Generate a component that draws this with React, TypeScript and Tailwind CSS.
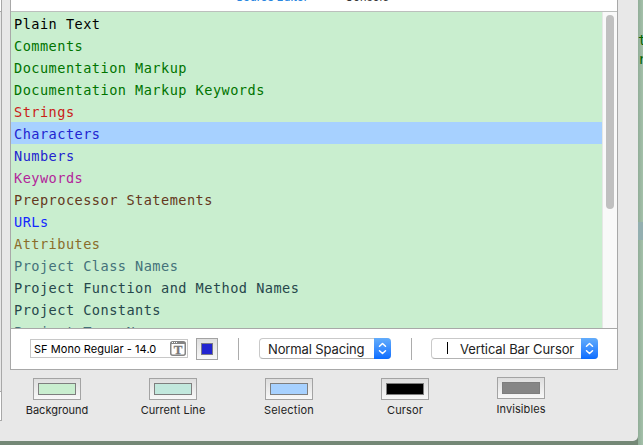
import React from "react";

const rows: { label: string; color: string; selected?: boolean }[] = [
  { label: "Plain Text", color: "text-[#000000]" },
  { label: "Comments", color: "text-[#007400]" },
  { label: "Documentation Markup", color: "text-[#007400]" },
  { label: "Documentation Markup Keywords", color: "text-[#007400]" },
  { label: "Strings", color: "text-[#c92018]" },
  { label: "Characters", color: "text-[#2224d0]", selected: true },
  { label: "Numbers", color: "text-[#2224d0]" },
  { label: "Keywords", color: "text-[#b3259a]" },
  { label: "Preprocessor Statements", color: "text-[#643820]" },
  { label: "URLs", color: "text-[#1428ff]" },
  { label: "Attributes", color: "text-[#8a6c2a]" },
  { label: "Project Class Names", color: "text-[#44727a]" },
  { label: "Project Function and Method Names", color: "text-[#26474b]" },
  { label: "Project Constants", color: "text-[#26474b]" },
  { label: "Project Type Names", color: "text-[#44727a]" },
];

const wells = [
  { label: "Background", fill: "bg-[#c9eecf]", lift: "pt-[8px]", text: "tracking-[0px]" },
  { label: "Current Line", fill: "bg-[#c2e8dd]", lift: "pt-[8px]", text: "tracking-[0.04px]" },
  { label: "Selection", fill: "bg-[#a7d1ff]", lift: "pt-[8px]", text: "tracking-[0.2px]" },
  { label: "Cursor", fill: "bg-black", lift: "pt-[8px]", text: "tracking-[0.12px]" },
  { label: "Invisibles", fill: "bg-[#868686]", lift: "pt-[7px]", text: "tracking-[0.08px]" },
];

function Stepper() {
  return (
    <div className="flex h-full w-[17px] shrink-0 items-center justify-center rounded-r-[4px] bg-gradient-to-b from-[#62acfb] to-[#086cff]">
      <svg width="9" height="13" viewBox="0 0 9 13" fill="none" stroke="white" strokeWidth="1.5" strokeLinecap="round" strokeLinejoin="round">
        <path d="M1.5 4.3 4.5 1.5 7.5 4.3M1.5 8.7 4.5 11.5 7.5 8.7" />
      </svg>
    </div>
  );
}

function FontIcon() {
  return (
    <svg width="16" height="15" viewBox="0 0 16 15">
      <rect x="0.75" y="0.75" width="14.5" height="13.5" rx="2" fill="white" stroke="#858585" strokeWidth="1.5" />
      <path d="M1 1h14v2H1z" fill="#858585" />
      <path d="M2 1.5h1M4 1.5h1M6 1.5h1" stroke="white" />
      <text x="8" y="12.6" textAnchor="middle" fontFamily="Liberation Serif, serif" fontWeight="bold" fontSize="13" fill="#777777" stroke="#777777" strokeWidth="0.3">T</text>
    </svg>
  );
}

export default function App() {
  return (
    <div className="flex h-[445px] w-[643px] overflow-hidden bg-[#748876] font-['Inter','Liberation_Sans',sans-serif] text-black">
      <div className="relative flex h-[441px] w-[638px] shrink-0 overflow-hidden rounded-br-[5px] bg-[#e8e8e8]">
        <div className="flex w-[2px] shrink-0 flex-col">
          <div className="h-[11px] border-r border-[#a8a8a8] bg-white" />
          <div className="h-px bg-[#a8a8a8]" />
          <div className="h-[379px] border-r border-[#a8a8a8] bg-[#e8e8e8]" />
          <div className="h-px bg-[#a8a8a8]" />
          <div className="h-[28px] border-r border-[#a8a8a8] bg-white" />
          <div className="h-px bg-[#a8a8a8]" />
        </div>
        <div className="ml-[8px] flex w-[608px] flex-col">
          <section className="flex h-[370px] shrink-0 flex-col border-x border-b border-[#a8a8a8] bg-white">
            <header className="flex h-[12px] shrink-0 items-end overflow-hidden border-b border-[#bcbfbd] text-[11px] leading-[14px] tracking-[0.2px]">
              <span className="mb-[7px] ml-[225px] w-[109px] font-medium tracking-[0.1px] text-[#2785df]">Source Editor</span>
              <span className="mb-[7px] text-[#333]">Console</span>
            </header>
            <div className="flex h-[316px] shrink-0 overflow-hidden bg-[#c9eecf]">
              <ul className="w-[591px] font-['DejaVu_Sans_Mono',monospace] text-[13.6px] tracking-[0.464px]">
                {rows.map((r) => (
                  <li key={r.label} className={`h-[22px] whitespace-pre pl-[3px] leading-[24px] ${r.color} ${r.selected ? "bg-[#a7d1ff]" : ""}`}>
                    {r.label}
                  </li>
                ))}
              </ul>
              <div className="flex w-[15px] justify-center border-l border-[#e5e8e5] bg-[#f9f9f9] pt-[3px]">
                <div className="h-[194px] w-[8px] rounded-full bg-[#c0c0c0]" />
              </div>
            </div>
            <footer className="flex h-[41px] items-start border-t border-[#a8a8a8] pt-[9px]">
              <div className="mt-px ml-[19px] flex h-[19px] w-[158px] items-center justify-between border border-[#c8c8c8] pr-px pl-[3px] text-[11px]">
                <span className="whitespace-pre pt-px tracking-[0.05px]">SF Mono Regular - 14.0</span>
                <FontIcon />
              </div>
              <div className="ml-[8px] flex size-[22px] items-center justify-center border border-[#a3a3a3] bg-gradient-to-b from-[#dfdfdf] to-[#f8f8f8]">
                <div className="size-[12px] border border-[#7b7b85] bg-[#2224d0]" />
              </div>
              <div className="ml-[20px] h-[22px] w-px bg-[#acacac]" />
              <div className="ml-[20px] flex h-[21px] w-[132px] rounded-[4px] border border-r-0 border-[#c9c9c9] border-b-[#b3b3b3]">
                <span className="flex-1 pl-[8px] text-[13px] leading-[20px] tracking-[-0.12px] whitespace-pre text-[#222]">Normal Spacing</span>
                <div className="-my-px h-[21px]"><Stepper /></div>
              </div>
              <div className="ml-[20px] h-[22px] w-px bg-[#acacac]" />
              <div className="ml-[19px] flex h-[21px] w-[167px] rounded-[4px] border border-r-0 border-[#c9c9c9] border-b-[#b3b3b3]">
                <div className="mt-[3px] ml-[15px] h-[12px] w-px bg-black" />
                <span className="flex-1 pl-[12px] text-[13px] leading-[20px] tracking-[-0.1px] whitespace-pre text-[#222]">Vertical Bar Cursor</span>
                <div className="-my-px h-[21px]"><Stepper /></div>
              </div>
            </footer>
          </section>
          <section className="-ml-[11px] flex">
            {wells.map((w) => (
              <div key={w.label} className={`flex w-[116px] shrink-0 flex-col items-center ${w.lift}`}>
                <div className="flex h-[22px] w-[48px] items-center justify-center border border-[#a3a3a3] bg-gradient-to-b from-[#dedede] to-[#f8f8f8]">
                  <div className={`h-[12px] w-[38px] border border-[#7e7e7e] ${w.fill}`} />
                </div>
                <span className={`mt-[3px] text-[11px] leading-[14px] whitespace-pre text-[#222] ${w.text}`}>{w.label}</span>
              </div>
            ))}
          </section>
        </div>
      </div>
      <aside className="h-full w-[5px] overflow-hidden bg-gradient-to-r from-[#91ad98] to-[#a4c1aa] pt-[31px] font-['DejaVu_Sans_Mono',monospace] text-[14px] leading-[19px] text-[#006400]">
        <div>t</div>
        <div>r</div>
        <div className="mt-[153px] h-[18px] bg-[#93afb0]" />
      </aside>
    </div>
  );
}
